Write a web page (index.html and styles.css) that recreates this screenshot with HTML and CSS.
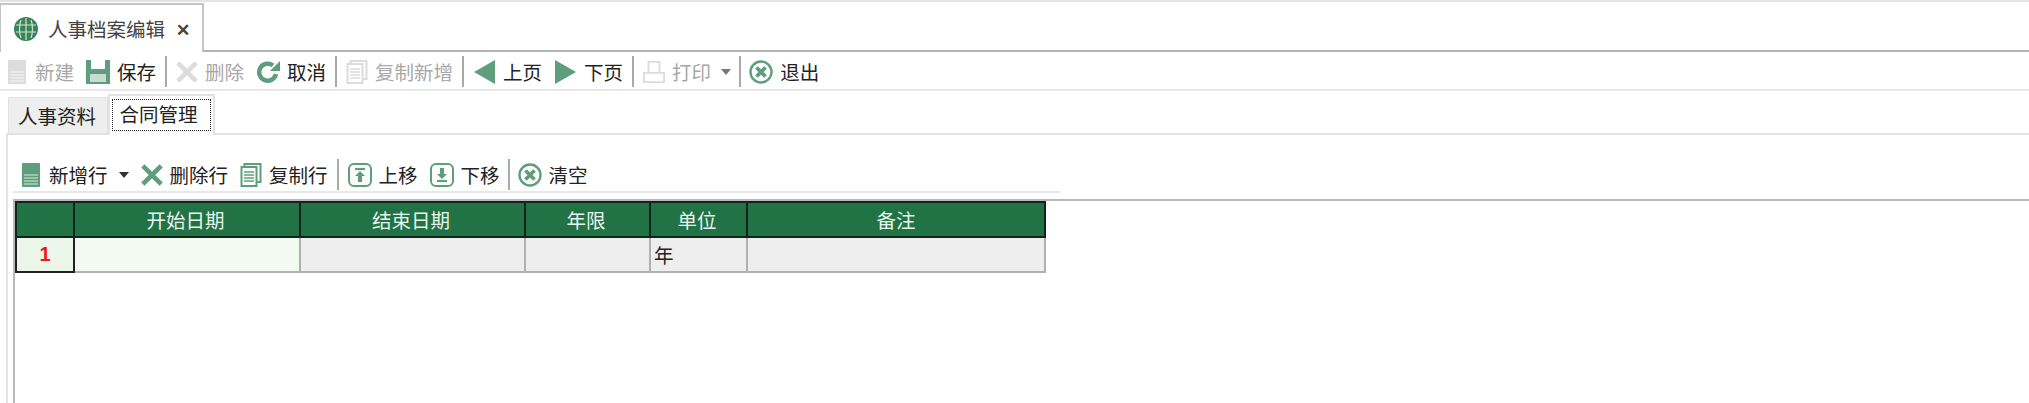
FILE: index.html
```html
<!DOCTYPE html>
<html lang="zh-CN">
<head>
  <meta charset="UTF-8" />
  <title>人事档案编辑</title>
  <link rel="stylesheet" href="styles.css">
</head>
<body>

  <!-- 图标 -->
  <svg class="defs" width="0" height="0">
    <symbol id="i-doc" viewBox="0 0 18 24">
      <path d="M1 0h16a1 1 0 0 1 1 1v22a1 1 0 0 1-1 1H1a1 1 0 0 1-1-1V1a1 1 0 0 1 1-1z" fill="currentColor"/>
      <path d="M2 12h14M2 15h14M2 18h14M2 21h14" stroke="#fff" stroke-width="1" opacity=".8"/>
    </symbol>
    <symbol id="i-save" viewBox="0 0 24 24">
      <path d="M0 0h24v24H0zM5 0v9h14V0zM4 14v8h16v-8z" fill="currentColor" fill-rule="evenodd"/>
      <path d="M4 14h16v8H4z" fill="currentColor" opacity=".35"/>
    </symbol>
    <symbol id="i-x" viewBox="0 0 24 24">
      <path d="M2 2l20 20M22 2L2 22" stroke="currentColor" stroke-width="5" fill="none"/>
    </symbol>
    <symbol id="i-redo" viewBox="0 0 24 24">
      <path d="M20 14a8.500 8.500 0 1 1-3-8.500" stroke="currentColor" stroke-width="4.500" fill="none"/>
      <path d="M14 11h10V1z" fill="currentColor"/>
    </symbol>
    <symbol id="i-copy" viewBox="0 0 22 24">
      <path d="M4.500 1h16v18h-16z" fill="#fff" stroke="currentColor" stroke-width="2"/>
      <path d="M1.500 4h15v19h-15z" fill="#fff" stroke="currentColor" stroke-width="2"/>
      <path d="M4 9h10M4 12h10M4 15h10M4 18h10" stroke="currentColor" stroke-width="1.500"/>
    </symbol>
    <symbol id="i-prev" viewBox="0 0 21 24">
      <path d="M21 0v24L0 12z" fill="currentColor"/>
    </symbol>
    <symbol id="i-next" viewBox="0 0 21 24">
      <path d="M0 0v24l21-12z" fill="currentColor"/>
    </symbol>
    <symbol id="i-print" viewBox="0 0 24 24">
      <path d="M6 13V1h12v12M1 13h22v10H1z" fill="none" stroke="currentColor" stroke-width="2"/>
    </symbol>
    <symbol id="i-close" viewBox="0 0 24 24">
      <circle cx="12" cy="12" r="10.500" fill="none" stroke="currentColor" stroke-width="2.400"/>
      <path d="M7.500 7.500l9 9M16.500 7.500l-9 9" stroke="currentColor" stroke-width="3.800" fill="none"/>
    </symbol>
    <symbol id="i-up" viewBox="0 0 24 24">
      <rect x="1" y="1" width="22" height="22" rx="5" fill="none" stroke="currentColor" stroke-width="2"/>
      <path d="M7 6h10" fill="none" stroke="currentColor" stroke-width="2.200"/>
      <path d="M12 8l5 5h-3v6h-4v-6H7z" fill="currentColor"/>
    </symbol>
    <symbol id="i-down" viewBox="0 0 24 24">
      <rect x="1" y="1" width="22" height="22" rx="5" fill="none" stroke="currentColor" stroke-width="2"/>
      <path d="M7 18h10" fill="none" stroke="currentColor" stroke-width="2.200"/>
      <path d="M12 16l5-5h-3V5h-4v6H7z" fill="currentColor"/>
    </symbol>
  </svg>

  <div class="tabbar">
    <div class="tab">
      <svg class="globe" width="24" height="24" viewBox="0 0 24 24">
        <circle cx="12" cy="12" r="12" fill="#3a8558"/>
        <path d="M2 8h20M2 15h20M12 1v22M7 3c-2 5-2 13 0 18M17 3c2 5 2 13 0 18" stroke="#cfe3d7" stroke-width="1.200" fill="none"/>
      </svg>
      <span>人事档案编辑</span>
      <span class="tab-close">✕</span>
    </div>
  </div>

  <div class="toolbar main-bar">
    <a class="btn off"><svg class="ic w18"><use href="#i-doc"/></svg>新建</a>
    <a class="btn"><svg class="ic"><use href="#i-save"/></svg>保存</a>
    <i class="sep"></i>
    <a class="btn off"><svg class="ic w22"><use href="#i-x"/></svg>删除</a>
    <a class="btn"><svg class="ic"><use href="#i-redo"/></svg>取消</a>
    <i class="sep"></i>
    <a class="btn off"><svg class="ic w22"><use href="#i-copy"/></svg>复制新增</a>
    <i class="sep"></i>
    <a class="btn"><svg class="ic w21"><use href="#i-prev"/></svg>上页</a>
    <a class="btn"><svg class="ic w21"><use href="#i-next"/></svg>下页</a>
    <i class="sep"></i>
    <a class="btn off"><svg class="ic w22"><use href="#i-print"/></svg>打印<b class="caret"></b></a>
    <i class="sep tight"></i>
    <a class="btn"><svg class="ic"><use href="#i-close"/></svg>退出</a>
  </div>

  <div class="subtabs">
    <div class="subtab">人事资料</div>
    <div class="subtab active"><span>合同管理</span></div>
  </div>

  <div class="panel">
    <div class="toolbar grid-bar">
      <a class="btn"><svg class="ic w18"><use href="#i-doc"/></svg>新增行<b class="caret dark"></b></a>
      <a class="btn"><svg class="ic w22"><use href="#i-x"/></svg>删除行</a>
      <a class="btn"><svg class="ic w22"><use href="#i-copy"/></svg>复制行</a>
      <i class="sep"></i>
      <a class="btn"><svg class="ic"><use href="#i-up"/></svg>上移</a>
      <a class="btn"><svg class="ic"><use href="#i-down"/></svg>下移</a>
      <i class="sep tight"></i>
      <a class="btn"><svg class="ic"><use href="#i-close"/></svg>清空</a>
    </div>

    <div class="grid-wrap">
      <table class="grid">
        <colgroup>
          <col class="c-no"><col class="c-date"><col class="c-date2"><col class="c-year"><col class="c-unit"><col class="c-note">
        </colgroup>
        <thead>
          <tr><th></th><th>开始日期</th><th>结束日期</th><th>年限</th><th>单位</th><th class="note">备注</th></tr>
        </thead>
        <tbody>
          <tr><td class="row-no">1</td><td class="cur"></td><td></td><td></td><td>年</td><td></td></tr>
        </tbody>
      </table>
    </div>
  </div>

</body>
</html>
```

FILE: styles.css
```css
* {
  box-sizing: border-box;
}
html, body {
  height: 403px;
}
body {
  margin: 0;
  display: flex;
  flex-direction: column;
  overflow: hidden;
  background-color: #ffffff;
  color: #222222;
  font-family: "Noto Sans CJK SC", "Liberation Sans", sans-serif;
  font-size: 19.5px;
}
.defs {
  position: absolute;
}
.tabbar {
  height: 52px;
  padding-top: 1px;
  border-top: 2px solid #e4e4e4;
  border-bottom: 2px solid #b5b5b5;
  display: flex;
}
.tab {
  width: 204px;
  height: 49px;
  padding-left: 13px;
  display: flex;
  align-items: center;
  background-color: #ffffff;
  border: 2px solid #c4c4c4;
  border-left: 1px solid #c4c4c4;
  border-bottom: none;
  color: #444444;
}
.globe {
  margin-right: 10px;
}
.tab-close {
  margin-left: 11px;
  font-size: 17px;
  font-weight: bold;
  color: #444444;
}
.toolbar {
  display: flex;
  align-items: center;
}
.main-bar {
  height: 39px;
  padding: 2px 0 0 8px;
  border-bottom: 2px solid #e8e8e8;
}
.btn {
  display: flex;
  align-items: center;
  gap: 7px;
  margin-right: 12px;
  line-height: 24px;
  white-space: nowrap;
  color: #222222;
}
.btn.off {
  color: #a8a8a8;
}
.ic {
  width: 24px;
  height: 24px;
  flex: none;
  color: #5f9e7c;
}
.off .ic {
  color: #dcdcdc;
}
.w18 {
  width: 18px;
  margin-right: 2px;
}
.w21 {
  width: 21px;
  margin: 0 1px;
}
.w22 {
  width: 22px;
}
.sep {
  width: 2px;
  height: 31px;
  margin: 0 9px 0 -3px;
  background-color: #a9a9a9;
}
.sep.tight {
  margin: 0 8px 0 -4px;
}
.caret {
  width: 0;
  height: 0;
  margin-left: 3px;
  border-left: 5px solid transparent;
  border-right: 5px solid transparent;
  border-top: 6px solid #777777;
}
.caret.dark {
  margin-left: 4px;
  border-top-color: #333333;
}
.subtabs {
  height: 42px;
  padding-left: 8px;
  display: flex;
  align-items: flex-end;
}
.subtab {
  width: 100px;
  height: 36px;
  padding-right: 2px;
  text-align: center;
  line-height: 36px;
  background-color: #eeeeee;
  border: 1px solid #e2e2e2;
  border-bottom: none;
}
.subtab.active {
  width: 107px;
  height: 41px;
  margin-bottom: -2px;
  padding: 3px 2px;
  background-color: #ffffff;
  position: relative;
  border: 2px solid #e2e2e2;
  border-bottom: none;
}
.subtab.active span {
  display: block;
  height: 32px;
  padding-right: 6px;
  line-height: 28px;
  border: 1px dotted #222222;
}
.panel {
  flex: 1;
  margin-left: 6px;
  padding-left: 5px;
  border-top: 2px solid #e2e2e2;
  border-left: 2px solid #e4e4e4;
  display: flex;
  flex-direction: column;
}
.grid-bar {
  width: 1047px;
  height: 58px;
  padding: 23px 0 0 9px;
  border-bottom: 2px solid #e8e8e8;
}
.grid-wrap {
  flex: 1;
  margin-top: 6px;
  border-top: 2px solid #b9b9b9;
  border-left: 2px solid #b9b9b9;
}
.grid {
  width: 1031px;
  table-layout: fixed;
  border-collapse: collapse;
}
.c-no { width: 58px; }
.c-date { width: 226px; }
.c-date2 { width: 225px; }
.c-year { width: 125px; }
.c-unit { width: 97px; }
.grid th {
  height: 35px;
  padding: 0 3px 0 0;
  font-weight: normal;
  color: #e8f3ec;
  background-color: #217346;
  border: 2px solid #10241a;
}
.grid th.note {
  padding: 0;
}
.grid td {
  height: 35px;
  padding: 0 3px;
  background-color: #eeeeee;
  border: 2px solid #b0b0b0;
}
.grid td.cur {
  background-color: #f3faf2;
}
.grid td.row-no {
  text-align: center;
  color: #f01818;
  font-family: "Liberation Sans", sans-serif;
  font-size: 20px;
  font-weight: bold;
  background-color: #edf6ea;
  border: 2px solid #222222;
}
```
